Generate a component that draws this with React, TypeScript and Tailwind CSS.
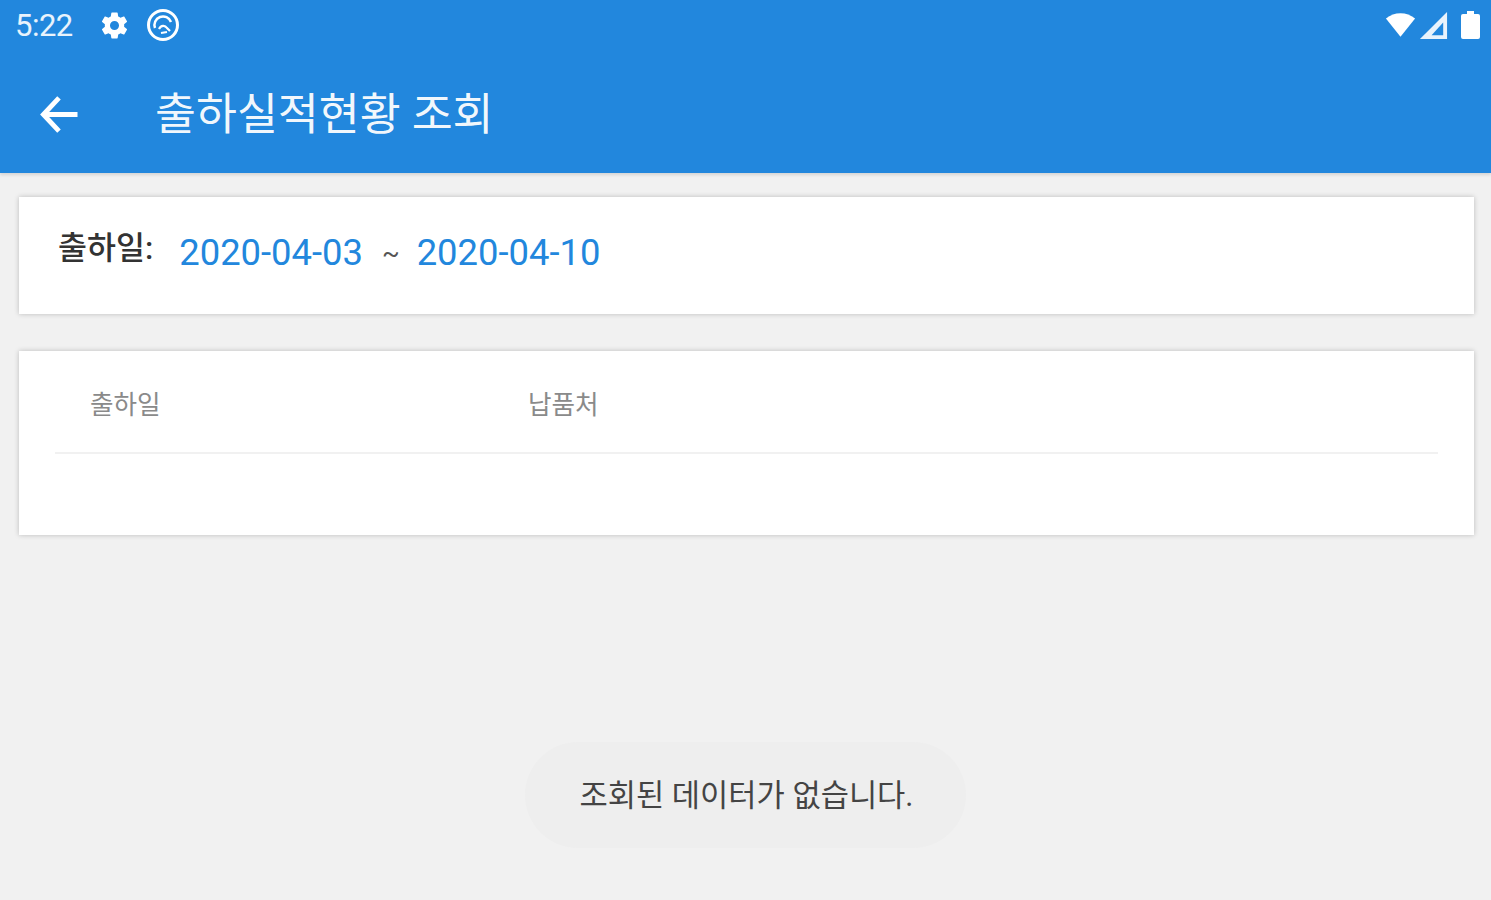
const KR = "font-['Roboto','Noto_Sans_CJK_KR',sans-serif]";

function StatusBar() {
  return (
    <div className="flex h-[50px] items-center justify-between pl-[15px] pr-[11px] text-white">
      <div className="flex items-center">
        <span className="w-[60px] text-[31px] leading-none tracking-[-0.5px] text-white/90">5:22</span>
        {/* settings gear */}
        <svg className="ml-[24px] h-[31px] w-[31px]" viewBox="0 0 24 24" fill="currentColor">
          <path d="M19.43 12.98c.04-.32.07-.64.07-.98s-.03-.66-.07-.98l2.11-1.65c.19-.15.24-.42.12-.64l-2-3.46c-.12-.22-.39-.3-.61-.22l-2.49 1c-.52-.4-1.08-.73-1.69-.98l-.38-2.65A.49.49 0 0 0 14 2h-4c-.25 0-.46.18-.49.42l-.38 2.65c-.61.25-1.17.59-1.69.98l-2.49-1c-.23-.09-.49 0-.61.22l-2 3.46c-.13.22-.07.49.12.64l2.11 1.65c-.04.32-.07.65-.07.98s.03.66.07.98l-2.11 1.65c-.19.15-.24.42-.12.64l2 3.46c.12.22.39.3.61.22l2.49-1c.52.4 1.08.73 1.69.98l.38 2.65c.03.24.24.42.49.42h4c.25 0 .46-.18.49-.42l.38-2.65c.61-.25 1.17-.59 1.69-.98l2.49 1c.23.09.49 0 .61-.22l2-3.46c.12-.22.07-.49-.12-.64l-2.11-1.65zM12 15.5a3.5 3.5 0 1 1 0-7 3.5 3.5 0 0 1 0 7z" />
        </svg>
        {/* data saver ring */}
        <svg className="ml-[16px] h-[34px] w-[34px]" viewBox="0 0 34 34" fill="none" stroke="currentColor">
          <circle cx="17" cy="17" r="14.5" strokeWidth="3" />
          <path d="M9 20a8.5 8.5 0 0 1 16-6" strokeWidth="2.5" />
          <path d="M13 21c2-4 6-4 8-1l3 3M15 25l6-1" strokeWidth="2.2" />
        </svg>
      </div>
      <div className="flex items-center">
        {/* wifi */}
        <svg className="h-[28px] w-[31px]" viewBox="0 0 34 28" fill="currentColor">
          <path d="M1 7C6 3 11 1 17 1s11 2 16 6L17 27 1 7z" />
        </svg>
        {/* cell signal */}
        <svg className="ml-[3px] h-[29px] w-[29px]" viewBox="0 0 30 30" fill="none">
          <path d="M29 1v28H1L29 1z" fill="#ffffff" fillOpacity="0.9" />
          <path d="M25 12v13H13l12-13z" fill="#2287dd" />
        </svg>
        {/* battery */}
        <svg className="ml-[13px] h-[28px] w-[19px]" viewBox="0 0 19 28" fill="currentColor">
          <path d="M6 0h7v3h4a2 2 0 0 1 2 2v21a2 2 0 0 1-2 2H2a2 2 0 0 1-2-2V5a2 2 0 0 1 2-2h4V0z" />
        </svg>
      </div>
    </div>
  );
}

function Card({ className, children }: { className: string; children: React.ReactNode }) {
  return (
    <div className={`ml-[19px] mr-[17px] bg-white shadow-[0_0_5px_rgba(0,0,0,0.22)] ${className}`}>{children}</div>
  );
}

export default function App() {
  return (
    <div className={`relative h-[900px] overflow-hidden bg-[#f1f1f1] ${KR}`}>
      {/* ── Header ─────────────────────────────── */}
      <header className="h-[173px] bg-[#2287dd] shadow-[0_2px_3px_rgba(0,0,0,0.12)]">
        <StatusBar />
        <div className="flex h-[123px] items-start text-white">
          <svg className="ml-[40px] mt-[46px] h-[37px] w-[38px]" viewBox="0 0 38 38" fill="none" stroke="currentColor" strokeWidth="5">
            <path d="M38 19H4M19 2L3 19l16 17" />
          </svg>
          <h1 className="ml-[77px] mt-[35px] text-[44.5px] leading-[60px] font-normal text-white/95">출하실적현황 조회</h1>
        </div>
      </header>

      {/* ── Date filter ────────────────────────── */}
      <Card className="mt-[24px] h-[117px]">
        <div className="flex items-start pl-[39px] pt-[31px]">
          <span className="text-[31.5px] leading-[42px] font-medium text-[#333]">출하일:</span>
          <span className="ml-[26px] mt-[4px] text-[36.4px] leading-[42px] text-[#2287dd]">2020-04-03</span>
          <span className="ml-[19px] mt-[4px] text-[26px] leading-[42px] text-[#555]">~</span>
          <span className="ml-[17px] mt-[4px] text-[36.4px] leading-[42px] text-[#2287dd]">2020-04-10</span>
        </div>
      </Card>

      {/* ── Result table ───────────────────────── */}
      <Card className="mt-[37px] h-[184px]">
        <div className="mx-[36px] flex h-[103px] items-start border-b-2 border-[#f1f1f1] pt-[37px] text-[25.6px] leading-[34px] text-[#8a8a8a]">
          <span className="ml-[35px] w-[438px]">출하일</span>
          <span>납품처</span>
        </div>
      </Card>

      {/* ── Toast ──────────────────────────────── */}
      <div className="absolute left-[525px] top-[742px] flex h-[106px] w-[441px] items-center justify-center rounded-[53px] bg-[#eeeeee] pt-[2px] pl-[2px] text-[30.7px] text-[#444]">
        조회된 데이터가 없습니다.
      </div>
    </div>
  );
}
